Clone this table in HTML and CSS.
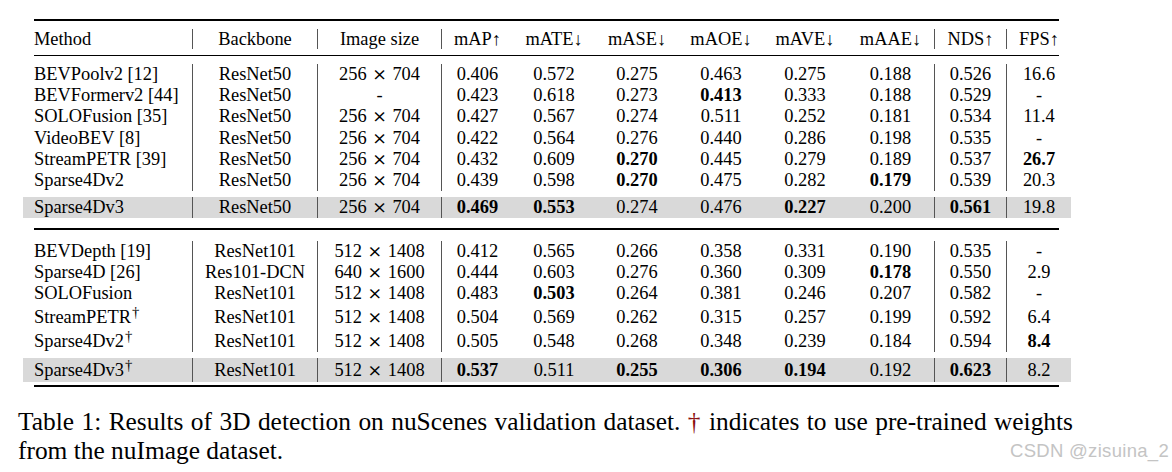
FILE: index.html
```html
<!DOCTYPE html>
<html lang="en">
<head>
<meta charset="utf-8">
<title>Table 1</title>
<link rel="stylesheet" href="styles.css">
</head>
<body>
<div class="page">
  <div class="tbl">
    <div class="rule rule-top"></div>
    <div class="row head">
      <div class="c c-method">Method</div>
      <div class="c sep">Backbone</div>
      <div class="c sep">Image size</div>
      <div class="c sep">mAP↑</div>
      <div class="c">mATE↓</div>
      <div class="c">mASE↓</div>
      <div class="c">mAOE↓</div>
      <div class="c">mAVE↓</div>
      <div class="c">mAAE↓</div>
      <div class="c sep">NDS↑</div>
      <div class="c sep">FPS↑</div>
    </div>
    <div class="rule rule-light"></div>

    <div class="group g1">
      <div class="row">
        <div class="c c-method">BEVPoolv2 [12]</div><div class="c sep">ResNet50</div><div class="c sep">256 <span class="x">×</span> 704</div>
        <div class="c sep">0.406</div><div class="c">0.572</div><div class="c">0.275</div><div class="c">0.463</div><div class="c">0.275</div><div class="c">0.188</div>
        <div class="c sep">0.526</div><div class="c sep">16.6</div>
      </div>
      <div class="row">
        <div class="c c-method">BEVFormerv2 [44]</div><div class="c sep">ResNet50</div><div class="c sep">-</div>
        <div class="c sep">0.423</div><div class="c">0.618</div><div class="c">0.273</div><div class="c b">0.413</div><div class="c">0.333</div><div class="c">0.188</div>
        <div class="c sep">0.529</div><div class="c sep">-</div>
      </div>
      <div class="row">
        <div class="c c-method">SOLOFusion [35]</div><div class="c sep">ResNet50</div><div class="c sep">256 <span class="x">×</span> 704</div>
        <div class="c sep">0.427</div><div class="c">0.567</div><div class="c">0.274</div><div class="c">0.511</div><div class="c">0.252</div><div class="c">0.181</div>
        <div class="c sep">0.534</div><div class="c sep">11.4</div>
      </div>
      <div class="row">
        <div class="c c-method">VideoBEV [8]</div><div class="c sep">ResNet50</div><div class="c sep">256 <span class="x">×</span> 704</div>
        <div class="c sep">0.422</div><div class="c">0.564</div><div class="c">0.276</div><div class="c">0.440</div><div class="c">0.286</div><div class="c">0.198</div>
        <div class="c sep">0.535</div><div class="c sep">-</div>
      </div>
      <div class="row">
        <div class="c c-method">StreamPETR [39]</div><div class="c sep">ResNet50</div><div class="c sep">256 <span class="x">×</span> 704</div>
        <div class="c sep">0.432</div><div class="c">0.609</div><div class="c b">0.270</div><div class="c">0.445</div><div class="c">0.279</div><div class="c">0.189</div>
        <div class="c sep">0.537</div><div class="c sep b">26.7</div>
      </div>
      <div class="row">
        <div class="c c-method">Sparse4Dv2</div><div class="c sep">ResNet50</div><div class="c sep">256 <span class="x">×</span> 704</div>
        <div class="c sep">0.439</div><div class="c">0.598</div><div class="c b">0.270</div><div class="c">0.475</div><div class="c">0.282</div><div class="c b">0.179</div>
        <div class="c sep">0.539</div><div class="c sep">20.3</div>
      </div>
    </div>
    <div class="row hl hl1">
      <div class="c c-method">Sparse4Dv3</div><div class="c sep">ResNet50</div><div class="c sep">256 <span class="x">×</span> 704</div>
      <div class="c sep b">0.469</div><div class="c b">0.553</div><div class="c">0.274</div><div class="c">0.476</div><div class="c b">0.227</div><div class="c">0.200</div>
      <div class="c sep b">0.561</div><div class="c sep">19.8</div>
    </div>
    <div class="rule rule-heavy"></div>

    <div class="group g2">
      <div class="row">
        <div class="c c-method">BEVDepth [19]</div><div class="c sep">ResNet101</div><div class="c sep">512 <span class="x">×</span> 1408</div>
        <div class="c sep">0.412</div><div class="c">0.565</div><div class="c">0.266</div><div class="c">0.358</div><div class="c">0.331</div><div class="c">0.190</div>
        <div class="c sep">0.535</div><div class="c sep">-</div>
      </div>
      <div class="row">
        <div class="c c-method">Sparse4D [26]</div><div class="c sep">Res101-DCN</div><div class="c sep">640 <span class="x">×</span> 1600</div>
        <div class="c sep">0.444</div><div class="c">0.603</div><div class="c">0.276</div><div class="c">0.360</div><div class="c">0.309</div><div class="c b">0.178</div>
        <div class="c sep">0.550</div><div class="c sep">2.9</div>
      </div>
      <div class="row">
        <div class="c c-method">SOLOFusion</div><div class="c sep">ResNet101</div><div class="c sep">512 <span class="x">×</span> 1408</div>
        <div class="c sep">0.483</div><div class="c b">0.503</div><div class="c">0.264</div><div class="c">0.381</div><div class="c">0.246</div><div class="c">0.207</div>
        <div class="c sep">0.582</div><div class="c sep">-</div>
      </div>
      <div class="row tall">
        <div class="c c-method">StreamPETR<sup>†</sup></div><div class="c sep">ResNet101</div><div class="c sep">512 <span class="x">×</span> 1408</div>
        <div class="c sep">0.504</div><div class="c">0.569</div><div class="c">0.262</div><div class="c">0.315</div><div class="c">0.257</div><div class="c">0.199</div>
        <div class="c sep">0.592</div><div class="c sep">6.4</div>
      </div>
      <div class="row tall">
        <div class="c c-method">Sparse4Dv2<sup>†</sup></div><div class="c sep">ResNet101</div><div class="c sep">512 <span class="x">×</span> 1408</div>
        <div class="c sep">0.505</div><div class="c">0.548</div><div class="c">0.268</div><div class="c">0.348</div><div class="c">0.239</div><div class="c">0.184</div>
        <div class="c sep">0.594</div><div class="c sep b">8.4</div>
      </div>
    </div>
    <div class="row hl hl2">
      <div class="c c-method">Sparse4Dv3<sup>†</sup></div><div class="c sep">ResNet101</div><div class="c sep">512 <span class="x">×</span> 1408</div>
      <div class="c sep b">0.537</div><div class="c">0.511</div><div class="c b">0.255</div><div class="c b">0.306</div><div class="c b">0.194</div><div class="c">0.192</div>
      <div class="c sep b">0.623</div><div class="c sep">8.2</div>
    </div>
    <div class="rule rule-bottom"></div>
  </div>

  <p class="caption"><span class="cap-line1">Table 1: Results of 3D detection on nuScenes validation dataset. <span class="dagger">†</span> indicates to use pre-trained weights</span><span class="cap-line2">from the nuImage dataset.</span></p>

  <div class="watermark">CSDN @zisuina_2</div>
</div>
</body>
</html>
```

FILE: styles.css
```css
html, body {
  margin: 0;
  padding: 0;
  background: #ffffff;
}

.page {
  position: relative;
  width: 1172px;
  height: 472px;
  overflow: hidden;
  font-family: "Liberation Serif", "Times New Roman", serif;
  color: #000;
}

.tbl {
  margin-left: 23px;
  width: 1048px;
  padding-top: 19px;
  font-size: 18.4px;
}

.rule {
  margin: 0 12px 0 11px;
  background: #000;
}
.rule-top { height: 2px; }
.rule-light { height: 1.4px; }
.rule-heavy { height: 2px; margin-top: 10px; }
.rule-bottom { height: 2px; margin-top: 3px; }

.row {
  display: grid;
  grid-template-columns: 169px 125px 124px 72px 82px 84px 84px 84px 87px 72px 65px;
  height: 21.2px;
}

.head {
  height: 20px;
  margin: 8px 0 5.6px;
}
.head .c {
  line-height: 20px;
}

.group.g1 { margin-top: 8px; }
.group.g2 { margin-top: 11px; }
.g2 .row { height: 21px; }
.g2 .row.tall { height: 24px; }
.g2 .row.tall .c { padding-top: 3px; }

.c {
  display: block;
  text-align: center;
  white-space: nowrap;
  line-height: 21px;
}

.c-method {
  text-align: left;
  padding-left: 11px;
}

.sep {
  border-left: 1px solid #555;
}

.b {
  font-weight: bold;
}

.x {
  font-family: "DejaVu Serif", "Liberation Serif", serif;
  font-size: 0.95em;
  line-height: 0;
  vertical-align: baseline;
  margin: 0 1px;
}

sup {
  font-size: 0.8em;
  line-height: 0;
  vertical-align: baseline;
  position: relative;
  top: -0.42em;
  margin-left: 1px;
}

.hl {
  background: #d9d9d9;
}
.hl1 {
  margin-top: 6px;
  height: 21px;
}
.hl2 {
  margin-top: 6px;
  height: 24px;
}
.hl2 .c {
  line-height: 23px;
  padding-top: 1px;
}

.caption {
  margin: 20px 0 0 18px;
  width: 1055px;
  font-size: 25.4px;
  line-height: 29px;
}
.cap-line1 {
  display: block;
  text-align: justify;
  text-align-last: justify;
}
.cap-line2 {
  display: block;
}
.dagger {
  color: #8a1010;
}

.watermark {
  position: absolute;
  right: 3px;
  top: 440px;
  font-family: "Liberation Sans", Arial, sans-serif;
  font-size: 18.5px;
  line-height: 22px;
  color: #c4c4c4;
  letter-spacing: 0.3px;
}
```
